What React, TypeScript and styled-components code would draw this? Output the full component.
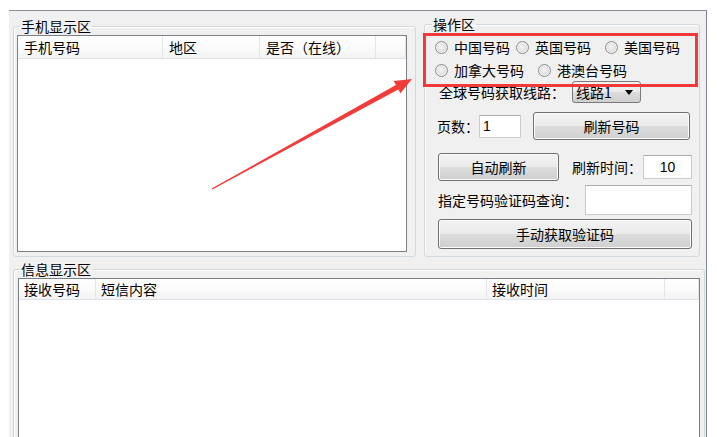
import styled, { createGlobalStyle } from "styled-components";

const GlobalStyle = createGlobalStyle`
    html, body {
        margin: 0;
        padding: 0;
        background: #ffffff;
        overflow: hidden;
    }
    body {
        font-family: "Noto Sans CJK SC", "Liberation Sans", sans-serif;
        font-size: 14px;
        color: #000;
    }
`;

const Page = styled.div`
    position: relative;
    width: 717px;
    height: 437px;
    overflow: hidden;
`;

const Window = styled.div`
    margin: 10px 0 0 9px;
    width: 698px;
    height: 440px;
    box-sizing: border-box;
    background: #f0f0f0;
    border-top: 1px solid #8a9099;
    border-right: 1px solid #7f858e;
    padding: 5px 1px 0 4px;
    display: flex;
    flex-direction: column;
`;

const TopRow = styled.div`
    display: flex;
    align-items: stretch;
    gap: 8px;
`;

const GroupBox = styled.fieldset<{ $w?: number; $mt?: number; $pad: string }>`
    margin: ${(p) => p.$mt ?? 0}px 0 0 0;
    min-width: 0;
    ${(p) => (p.$w ? `width: ${p.$w}px;` : "")}
    box-sizing: border-box;
    border: 1px solid #d0d7dd;
    border-radius: 3px;
    box-shadow: inset 1px 1px 0 #ffffff;
    padding: ${(p) => p.$pad};
    display: flex;
    flex-direction: column;
`;

const Legend = styled.legend<{ $ml: number }>`
    margin-left: ${(p) => p.$ml}px;
    padding: 0 1px;
    font-size: 14px;
    line-height: 16px;
    height: 16px;
`;

const BottomGroup = styled(GroupBox)`
    flex: 1;
    margin-top: 4px;
`;

const ListView = styled.div`
    flex: 1;
    background: #ffffff;
    border: 1px solid #7b7f86;
    display: flex;
    flex-direction: column;
`;

const ListHeader = styled.div<{ $h: number }>`
    display: flex;
    height: ${(p) => p.$h}px;
    box-sizing: border-box;
    background: linear-gradient(#ffffff 0%, #fbfbfb 50%, #f3f4f5 100%);
    border-bottom: 1px solid #dfe2e6;
`;

const HeaderCell = styled.div<{ $w?: number; $pl: number }>`
    ${(p) => (p.$w ? `width: ${p.$w}px;` : "flex: 1;")}
    box-sizing: border-box;
    padding-left: ${(p) => p.$pl}px;
    border-right: 1px solid #e3e5e8;
    display: flex;
    align-items: center;
    white-space: nowrap;
    line-height: 16px;
`;

const Row = styled.div<{ $mt: number; $h: number }>`
    display: flex;
    align-items: center;
    margin-top: ${(p) => p.$mt}px;
    height: ${(p) => p.$h}px;
    white-space: nowrap;
    line-height: 16px;
`;

const RadioItem = styled.label<{ $w?: number }>`
    display: flex;
    align-items: center;
    gap: 6px;
    ${(p) => (p.$w ? `width: ${p.$w}px;` : "")}
    flex-shrink: 0;
`;

const RadioDot = styled.span`
    width: 13px;
    height: 13px;
    box-sizing: border-box;
    border-radius: 50%;
    border: 1px solid #8b8d90;
    background: radial-gradient(circle at 45% 45%, #f6f6f6 0%, #e2e2e2 45%, #c9cacb 100%);
    box-shadow: inset 0 0 0 1px #f4f4f4;
`;

const Label = styled.span<{ $ml?: number }>`
    margin-left: ${(p) => p.$ml ?? 0}px;
`;

const Combo = styled.div`
    margin-left: 7px;
    width: 69px;
    height: 22px;
    box-sizing: border-box;
    border: 1px solid #7a7a7a;
    border-radius: 3px;
    background: linear-gradient(#f2f2f2 0%, #ebebeb 50%, #dddddd 50%, #cfcfcf 100%);
    display: flex;
    align-items: center;
    justify-content: space-between;
    padding: 0 7px 0 3px;
`;

const ComboArrow = styled.span`
    width: 0;
    height: 0;
    border-left: 4px solid transparent;
    border-right: 4px solid transparent;
    border-top: 5px solid #000;
`;

const Button = styled.button<{ $w: number; $ml?: number }>`
    margin-left: ${(p) => p.$ml ?? 0}px;
    width: ${(p) => p.$w}px;
    height: 28px;
    box-sizing: border-box;
    border: 1px solid #707070;
    border-radius: 3px;
    background: linear-gradient(#f2f2f2 0%, #ebebeb 50%, #dddddd 50%, #cfcfcf 100%);
    box-shadow: inset 0 0 0 1px #fbfbfb;
    font-family: inherit;
    font-size: 14px;
    color: #000;
    padding: 0;
    line-height: 16px;
`;

const TextBox = styled.div<{ $w: number; $h: number; $ml?: number; $center?: boolean }>`
    margin-left: ${(p) => p.$ml ?? 0}px;
    width: ${(p) => p.$w}px;
    height: ${(p) => p.$h}px;
    box-sizing: border-box;
    background: #ffffff;
    border: 1px solid #c8ccd2;
    border-top-color: #abadb3;
    display: flex;
    align-items: center;
    justify-content: ${(p) => (p.$center ? "center" : "flex-start")};
    padding-left: ${(p) => (p.$center ? 0 : 3)}px;
    font-family: "Liberation Sans", sans-serif;
    font-size: 14px;
`;

const Mark = styled.div`
    position: absolute;
    left: 423px;
    top: 33px;
    width: 275px;
    height: 54px;
    box-sizing: border-box;
    border: 3px solid #f23a3a;
    pointer-events: none;
`;

const ArrowSvg = styled.svg`
    position: absolute;
    left: 0;
    top: 0;
    pointer-events: none;
`;

const topCols = [
    { title: "手机号码", w: 145 },
    { title: "地区", w: 97 },
    { title: "是否（在线）", w: 116 },
    { title: "" },
];

const msgCols = [
    { title: "接收号码", w: 77 },
    { title: "短信内容", w: 391 },
    { title: "接收时间", w: 178 },
    { title: "" },
];

function App(): JSX.Element {
    return (
        <Page>
            <GlobalStyle />
            <Window>
                <TopRow>
                    <GroupBox $w={403} $mt={2} $pad="1px 8px 4px 3px">
                        <Legend $ml={3}>手机显示区</Legend>
                        <ListView>
                            <ListHeader $h={23}>
                                {topCols.map((c, i) => (
                                    <HeaderCell key={i} $w={c.w} $pl={6}>
                                        {c.title}
                                    </HeaderCell>
                                ))}
                            </ListHeader>
                        </ListView>
                    </GroupBox>

                    <GroupBox $w={276} $pad="0 7px 7px 10px">
                        <Legend $ml={-3}>操作区</Legend>
                        <Row $mt={5} $h={20}>
                            <RadioItem $w={81}>
                                <RadioDot />
                                中国号码
                            </RadioItem>
                            <RadioItem $w={89}>
                                <RadioDot />
                                英国号码
                            </RadioItem>
                            <RadioItem>
                                <RadioDot />
                                美国号码
                            </RadioItem>
                        </Row>
                        <Row $mt={3} $h={20}>
                            <RadioItem $w={103}>
                                <RadioDot />
                                加拿大号码
                            </RadioItem>
                            <RadioItem>
                                <RadioDot />
                                港澳台号码
                            </RadioItem>
                        </Row>
                        <Row $mt={1} $h={22}>
                            <Label $ml={4}>全球号码获取线路：</Label>
                            <Combo>
                                <span>线路1</span>
                                <ComboArrow />
                            </Combo>
                        </Row>
                        <Row $mt={9} $h={28}>
                            <Label $ml={2}>页数：</Label>
                            <TextBox $w={42} $h={23}>1</TextBox>
                            <Button $w={157} $ml={12}>刷新号码</Button>
                        </Row>
                        <Row $mt={13} $h={28}>
                            <Button $w={121} $ml={3}>自动刷新</Button>
                            <Label $ml={13}>刷新时间：</Label>
                            <TextBox $w={49} $h={24} $ml={1} $center>10</TextBox>
                        </Row>
                        <Row $mt={4} $h={30}>
                            <Label $ml={3}>指定号码验证码查询：</Label>
                            <TextBox $w={107} $h={30} $ml={7} />
                        </Row>
                        <Row $mt={4} $h={30}>
                            <Button $w={254} $ml={3} style={{ height: 30 }}>手动获取验证码</Button>
                        </Row>
                    </GroupBox>
                </TopRow>

                <BottomGroup $pad="1px 4px 4px 4px">
                    <Legend $ml={2}>信息显示区</Legend>
                    <ListView>
                        <ListHeader $h={21}>
                            {msgCols.map((c, i) => (
                                <HeaderCell key={i} $w={c.w} $pl={5}>
                                    {c.title}
                                </HeaderCell>
                            ))}
                        </ListHeader>
                    </ListView>
                </BottomGroup>
            </Window>

            <Mark />
            <ArrowSvg width="717" height="437" viewBox="0 0 717 437">
                <polygon
                    points="211.6,188.6 395.9,85.0 393.7,81.1 412,79 400.5,93.3 398.3,89.4 212.4,189.4"
                    fill="#f23b3b"
                />
            </ArrowSvg>
        </Page>
    );
}

export default App;
